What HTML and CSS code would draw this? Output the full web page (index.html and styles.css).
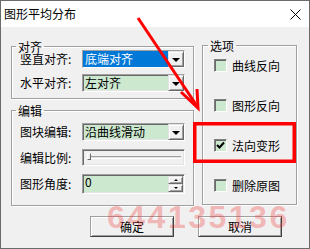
FILE: index.html
```html
<!DOCTYPE html>
<html lang="zh-CN">

<head>
    <meta charset="UTF-8">
    <meta name="viewport" content="width=device-width, initial-scale=1.0">
    <title>图形平均分布</title>
    <link rel="stylesheet" href="styles.css">
</head>

<body>

    <div class="screen">
        <div class="window">
            <div class="titlebar">
                <span class="title">图形平均分布</span>
                <svg class="close" viewBox="0 0 11 11">
                    <path d="M0.5 0.5 L10.5 10.5 M10.5 0.5 L0.5 10.5" stroke="#000" stroke-width="1" />
                </svg>
            </div>

            <div class="content">
                <div class="columns">
                    <div class="left">
                        <fieldset class="group group-align">
                            <legend>对齐</legend>
                            <div class="row">
                                <span class="label">竖直对齐:</span>
                                <div class="combo">
                                    <span class="value selected">底端对齐</span>
                                    <span class="drop"><i class="arrow"></i></span>
                                </div>
                            </div>
                            <div class="row">
                                <span class="label">水平对齐:</span>
                                <div class="combo">
                                    <span class="value">左对齐</span>
                                    <span class="drop"><i class="arrow"></i></span>
                                </div>
                            </div>
                        </fieldset>

                        <fieldset class="group group-edit">
                            <legend>编辑</legend>
                            <div class="row">
                                <span class="label">图块编辑:</span>
                                <div class="combo">
                                    <span class="value">沿曲线滑动</span>
                                    <span class="drop"><i class="arrow"></i></span>
                                </div>
                            </div>
                            <div class="row row-slider">
                                <span class="label">编辑比例:</span>
                                <div class="slider">
                                    <span class="track"></span>
                                    <span class="thumb"></span>
                                </div>
                            </div>
                            <div class="row row-spin">
                                <span class="label">图形角度:</span>
                                <div class="spin">
                                    <span class="value">0</span>
                                    <span class="spin-buttons">
                                        <span class="spin-btn"><i class="tri up"></i></span>
                                        <span class="spin-btn"><i class="tri down"></i></span>
                                    </span>
                                </div>
                            </div>
                        </fieldset>
                    </div>

                    <fieldset class="group options">
                        <legend>选项</legend>
                        <label class="check"><span class="box"></span>曲线反向</label>
                        <label class="check"><span class="box"></span>图形反向</label>
                        <label class="check"><span class="box">
                            <svg viewBox="0 0 9 9"><polyline points="1,4 3.5,6.5 8,1.5" fill="none" stroke="#000" stroke-width="2" /></svg>
                        </span>法向变形</label>
                        <label class="check"><span class="box"></span>删除原图</label>
                    </fieldset>
                </div>

                <div class="buttons">
                    <button class="btn">确定</button>
                    <button class="btn">取消</button>
                </div>
            </div>
        </div>

        <!-- watermark and red marks drawn over the dialog -->
        <div class="watermark">644135136</div>
        <svg class="marks" viewBox="0 0 310 249">
            <line x1="138" y1="18" x2="197" y2="106" stroke="#f00" stroke-width="3" />
            <polyline points="181,92 198,108 197,89" fill="none" stroke="#f00" stroke-width="3" />
            <rect x="194.75" y="123.75" width="99.5" height="37.5" fill="none" stroke="#f00" stroke-width="3.5" />
        </svg>
    </div>

</body>

</html>
```

FILE: styles.css
```css
/* CSS Reset */
html {
    box-sizing: border-box;
}

*,
*:before,
*:after {
    box-sizing: inherit;
}

body {
    margin: 0;
    font-family: "Noto Sans CJK SC", "Liberation Sans", sans-serif;
    font-size: 12px;
    color: #000;
    background: #fff;
}

.screen {
    position: relative;
    width: 310px;
    height: 249px;
    overflow: hidden;
}

.window {
    width: 310px;
    height: 249px;
    border: 1px solid #6b6b6b;
    background: #f0f0f0;
}

/* title bar */
.titlebar {
    display: flex;
    align-items: center;
    justify-content: space-between;
    height: 26px;
    padding: 0 8px 0 3px;
    background: #fff;
}

.title {
    line-height: 14px;
}

.close {
    width: 11px;
    height: 11px;
}

/* dialog body */
.content {
    padding: 15px 12px 0 10px;
}

.columns {
    display: flex;
    gap: 8px;
}

.left {
    width: 183px;
    margin-top: 1px;
}

.group {
    margin: 0;
    border: 1px solid #a0a0a0;
    box-shadow: 1px 1px 0 #fff, inset 1px 1px 0 #fff;
    min-width: 0;
}

.group legend {
    padding: 0 2px;
    margin-left: -4px;
    line-height: 7px;
}

.group-align {
    padding: 0 8px 6px;
}

.group-edit {
    margin-top: 8px;
    padding: 9px 8px 11px;
}

.row {
    display: flex;
    align-items: center;
    justify-content: space-between;
    height: 18px;
}

.row + .row {
    margin-top: 6px;
}

.group-edit .row + .row {
    margin-top: 8px;
}

.group-edit .row-slider {
    height: 17px;
}

.group-edit .row-spin {
    height: 20px;
    margin-top: 9px;
}

.label {
    line-height: 14px;
}

/* sunken boxes */
.combo,
.slider,
.spin {
    width: 103px;
    height: 100%;
    display: flex;
    border: 1px solid;
    border-color: #a0a0a0 #fff #fff #a0a0a0;
    box-shadow: inset 1px 1px 0 #696969, inset -1px -1px 0 #e3e3e3;
    background: #cce8cf;
}

.combo .value {
    flex: 1;
    padding-left: 2px;
    line-height: 16px;
}

.value.selected {
    background: #0078d7;
    color: #fff;
}

.drop,
.spin-btn {
    display: flex;
    align-items: center;
    justify-content: center;
    background: #f0f0f0;
    border: 1px solid;
    border-color: #e3e3e3 #696969 #696969 #e3e3e3;
    box-shadow: inset 1px 1px 0 #fff, inset -1px -1px 0 #a0a0a0;
}

.drop {
    width: 16px;
}

.arrow {
    border-left: 4px solid transparent;
    border-right: 4px solid transparent;
    border-top: 4px solid #000;
    margin-top: 1px;
}

/* slider */
.slider {
    position: relative;
    background: #f0f0f0;
    align-items: center;
    padding: 0 3px 0 5px;
}

.track {
    flex: 1;
    height: 3px;
    border-top: 1px solid #a0a0a0;
    border-bottom: 1px solid #fff;
    background: #e3e3e3;
}

.thumb {
    position: absolute;
    left: 4px;
    top: 3px;
    width: 4px;
    height: 7px;
    background: #f0f0f0;
    border: 1px solid;
    border-color: #fff #696969 #696969 #fff;
}

/* spin box */
.spin .value {
    flex: 1;
    padding: 1px 0 0 2px;
    line-height: 12px;
}

.spin-buttons {
    width: 16px;
    display: flex;
    flex-direction: column;
    padding: 1px 1px 1px 0;
}

.spin-btn {
    flex: 1;
}

.tri {
    border-left: 2px solid transparent;
    border-right: 2px solid transparent;
}

.tri.up {
    border-bottom: 2px solid #000;
}

.tri.down {
    border-top: 2px solid #000;
}

/* options */
.options {
    align-self: flex-start;
    width: 95px;
    display: flex;
    flex-direction: column;
    gap: 27px;
    padding: 10px 4px 12px 11px;
}

.options legend {
    margin-left: -6px;
}

.check {
    display: flex;
    align-items: center;
    gap: 5px;
    height: 13px;
    line-height: 14px;
}

.box {
    width: 13px;
    height: 13px;
    display: flex;
    align-items: center;
    justify-content: center;
    border: 1px solid;
    border-color: #808080 #fff #fff #808080;
    box-shadow: inset 1px 1px 0 #696969;
    background: #cce8cf;
}

.box svg {
    width: 9px;
    height: 9px;
}

/* bottom buttons */
.buttons {
    display: flex;
    justify-content: flex-end;
    gap: 24px;
    margin-top: 10px;
    padding-right: 15px;
}

.btn {
    width: 84px;
    height: 21px;
    padding: 0;
    font-family: inherit;
    font-size: 12px;
    line-height: 14px;
    color: #000;
    background: #f0f0f0;
    border: 1px solid;
    border-color: #a0a0a0 #404040 #404040 #a0a0a0;
    box-shadow: inset 1px 1px 0 #fff, inset -1px -1px 0 #a0a0a0;
}

/* overlays */
.watermark {
    position: absolute;
    left: 107px;
    top: 201px;
    font-family: "Liberation Sans", sans-serif;
    font-weight: bold;
    font-size: 32px;
    line-height: 32px;
    letter-spacing: 2.5px;
    color: rgba(240, 40, 40, 0.3);
}

.marks {
    position: absolute;
    left: 0;
    top: 0;
    width: 310px;
    height: 249px;
}
```
